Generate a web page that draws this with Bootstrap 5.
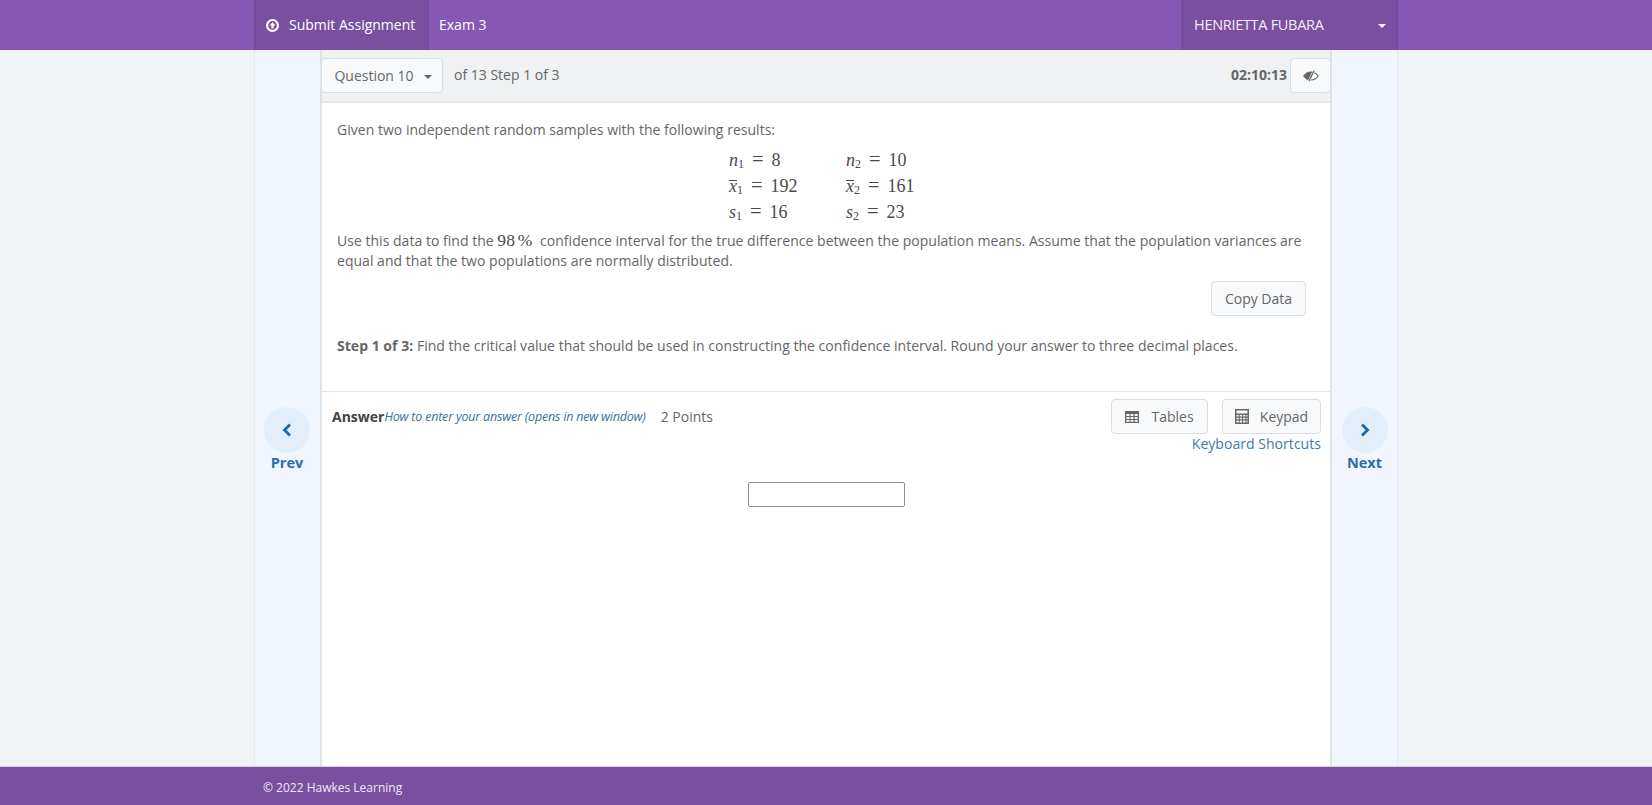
<!doctype html>
<html lang="en">
<head>
<meta charset="utf-8">
<title>Exam 3</title>
<link href="https://cdn.jsdelivr.net/npm/bootstrap@5.3.0/dist/css/bootstrap.min.css" rel="stylesheet">
<style>
html,body{height:100%}
body{font-family:"Open Sans","Noto Sans",sans-serif;font-size:14px;color:#666;background:#f1f4f7;line-height:20px;overflow:hidden}
.topbar{background:#8757b6;height:50px;flex:none}
.shell{width:1144px;margin:0 auto}
.submit-link{background:#7b4fa0;color:#fff;text-decoration:none;width:175px;padding-left:11px;gap:10px;border-left:1px solid #744a98;border-right:1px solid #744a98;font-size:14px}
.exam-title{color:#fff;padding-left:10px;font-size:14px}
.user-box{background:#7b4fa0;color:#f3ecf8;width:217px;padding:0 11px 0 13px;border-right:1px solid #6f4793;font-size:14.5px;letter-spacing:-.3px}
.caret-w{width:0;height:0;border-left:4px solid transparent;border-right:4px solid transparent;border-top:4px solid #fff;margin-top:2px}
.caret-d{width:0;height:0;border-left:4px solid transparent;border-right:4px solid transparent;border-top:4px solid #666;margin-top:2px}
.mid{min-height:0}
.mid .shell{border-left:1px solid #e4e9ef;border-right:1px solid #e4e9ef;background:#f1f6fe}
.side-col{width:65px;flex:none;padding-top:357px;color:#2a6fa8;font-weight:700;font-size:14.5px;text-align:center}
.side-prev{padding-right:1px}
.round-nav{width:46px;height:46px;border-radius:50%;background:#e3eefb;margin:0 auto}
.center-col{width:1012px;flex:none;background:#fff;border-left:2px solid #dfe3e7;border-right:2px solid #dfe3e7}
.tool-row{height:53px;background:#eff1f3;border-bottom:2px solid #e6e8ea;padding:8px 0 0 0}
.soft-btn{background:#f7f9fa;border:1px solid #d5dfe5;border-radius:4px;color:#666;font-size:14px;height:35px;line-height:33px;padding:0;display:inline-flex;align-items:center;justify-content:center}
.q-btn{width:122px;gap:10px;margin-left:-1px;padding-left:2px}
.of-text{margin-left:11px;margin-top:7px}
.timer{font-weight:700;margin-top:7px;margin-right:3px}
.eye-btn{width:41px;margin-right:-1px}
.q-body{padding:17px 16px 0 15px;height:289px;border-bottom:1px solid #e3e5e7}
.q-line{margin:0;letter-spacing:.025px}
.stats{display:grid;grid-template-columns:117px auto;grid-auto-rows:26px;justify-content:start;margin:7px 0 6px 392px;font-family:"Liberation Serif",serif;font-size:18px;color:#4a4a4a;line-height:26px}
.stats i{font-style:italic}
.stats sub{font-size:12px;font-style:normal;bottom:-.2em;line-height:0}
.eqs{margin:0 8px 0 8px;font-size:20.5px;line-height:0}
.xbar{display:inline-block;line-height:10px;border-top:1px solid #4a4a4a}
.pct{font-family:"Liberation Serif",serif;font-size:17.5px;word-spacing:-1.5px;color:#4a4a4a;margin-right:4px;line-height:1}
.copy-row{margin-top:10px;padding-right:8px}
.copy-btn{width:95px}
.step-line{margin-top:20px}
.ans-head{padding:7px 9px 0 10px;height:80px}
.ans-label{font-weight:700;color:#444;line-height:20px;margin-top:8px}
.ans-help{font-style:italic;font-size:12.5px;color:#3b6f9f;text-decoration:none;letter-spacing:-.2px;margin-top:8px}
.ans-pts{margin-left:15px;margin-top:8px}
.tool-btn{height:35px}
.t-btn{width:97px;gap:12px}
.k-btn{width:99px;gap:11px;margin-left:14px}
.kb-link{color:#3a7bab;text-decoration:none;font-size:14px;line-height:20px;letter-spacing:.04px}
.ans-field{width:157px;height:25px;border:1px solid #8f8f8f;border-radius:2px;background:#fff;display:block;margin:10px auto 0;padding:0}
.bottom-bar{background:#7b4fa0;height:39px;flex:none;border-top:1px solid #d6cfe0;color:#f0e8f5;font-size:12px}
.bottom-bar .shell{padding-left:9px;padding-top:3px}
</style>
</head>
<body class="d-flex flex-column">
<nav class="topbar">
  <div class="shell d-flex h-100">
    <a class="submit-link d-flex align-items-center" href="#">
      <svg width="13" height="13" viewBox="0 0 16 16" aria-hidden="true"><path fill="#fff" fill-rule="evenodd" d="M8 0a8 8 0 1 1 0 16A8 8 0 0 1 8 0zm0 2.6a5.4 5.4 0 1 0 0 10.800A5.400 5.400 0 0 0 8 2.600z"/><path fill="#fff" d="M8 4L11.700 8H9.300V11.700H6.700V8H4.300z"/></svg>
      <span>Submit Assignment</span>
    </a>
    <div class="exam-title d-flex align-items-center">Exam 3</div>
    <div class="user-box ms-auto d-flex align-items-center justify-content-between">
      <span>HENRIETTA FUBARA</span><span class="caret-w"></span>
    </div>
  </div>
</nav>
<div class="mid flex-grow-1">
  <div class="shell d-flex h-100">
    <div class="side-col side-prev">
      <div class="round-nav d-flex align-items-center justify-content-center">
        <svg width="10" height="14" viewBox="0 0 10 14" aria-hidden="true"><path d="M8 1.500L2.500 7 8 12.500" fill="none" stroke="#2268a4" stroke-width="2.800"/></svg>
      </div>
      <div>Prev</div>
    </div>
    <main class="center-col">
      <div class="tool-row d-flex">
        <button class="soft-btn q-btn" type="button">Question 10 <span class="caret-d"></span></button>
        <span class="of-text">of 13 Step 1 of 3</span>
        <span class="timer ms-auto">02:10:13</span>
        <button class="soft-btn eye-btn" type="button" aria-label="Hide timer">
          <svg width="16" height="12" viewBox="0 0 16 12" aria-hidden="true"><path fill="none" stroke="#666" stroke-width="1.200" d="M.8 6C2.500 3.400 5 2 8 2s5.500 1.400 7.200 4C13.500 8.600 11 10 8 10S2.500 8.600.8 6z"/><path fill="#666" d="M1 6c1.500-2.400 3.800-4 6.500-4 .6 0 1.200.1 1.800.2L6 10c-2.100-.4-3.900-1.900-5-4z"/><path stroke="#fff" stroke-width="2.400" d="M11 .8L6 11.200"/><path stroke="#666" stroke-width="1.300" d="M11 .8L6 11.200"/></svg>
        </button>
      </div>
      <section class="q-body">
        <p class="q-line">Given two independent random samples with the following results:</p>
        <div class="stats">
          <div><i>n</i><sub>1</sub><span class="eqs">=</span>8</div><div><i>n</i><sub>2</sub><span class="eqs">=</span>10</div>
          <div><i class="xbar">x</i><sub>1</sub><span class="eqs">=</span>192</div><div><i class="xbar">x</i><sub>2</sub><span class="eqs">=</span>161</div>
          <div><i>s</i><sub>1</sub><span class="eqs">=</span>16</div><div><i>s</i><sub>2</sub><span class="eqs">=</span>23</div>
        </div>
        <p class="q-line">Use this data to find the <span class="pct">98 %</span> confidence interval for the true difference between the population means. Assume that the population variances are equal and that the two populations are normally distributed.</p>
        <div class="copy-row d-flex justify-content-end">
          <button class="soft-btn copy-btn" type="button">Copy Data</button>
        </div>
        <p class="q-line step-line"><strong>Step 1 of 3:</strong> Find the critical value that should be used in constructing the confidence interval. Round your answer to three decimal places.</p>
      </section>
      <section class="ans-head d-flex">
        <span class="ans-label">Answer</span>
        <a class="ans-help" href="#">How to enter your answer (opens in new window)</a>
        <span class="ans-pts">2 Points</span>
        <div class="ms-auto text-end">
          <div class="d-flex justify-content-end">
            <button class="soft-btn tool-btn t-btn" type="button">
              <svg width="14" height="12" viewBox="0 0 14 12" aria-hidden="true"><path fill="#666" fill-rule="evenodd" d="M0 0h14v12H0zM1.300 3v2h3.200V3zm4.200 0v2h3V3zm4.200 0v2h3V3zM1.300 6v2h3.200V6zm4.200 0v2h3V6zm4.200 0v2h3V6zM1.300 9v1.800h3.200V9zm4.200 0v1.800h3V9zm4.200 0v1.800h3V9z"/></svg>
              <span>Tables</span>
            </button>
            <button class="soft-btn tool-btn k-btn" type="button">
              <svg width="14" height="15" viewBox="0 0 14 15" aria-hidden="true"><path fill="#666" fill-rule="evenodd" d="M0 0h14v15H0zM1.500 1.500v3h11v-3zM1.500 6v1.500h2.300V6zm3.300 0v1.500h2.300V6zm3.300 0v1.500h2.300V6zm3.300 0v1.500h1.100V6zM1.500 8.700v1.500h2.300V8.700zm3.300 0v1.500h2.300V8.700zm3.300 0v1.500h2.300V8.700zm3.300 0v1.500h1.100V8.700zM1.500 11.400v2.100h2.300v-2.100zm3.300 0v2.100h2.300v-2.100zm3.300 0v2.100h2.300v-2.100zm3.300 0v2.100h1.100v-2.100z"/></svg>
              <span>Keypad</span>
            </button>
          </div>
          <a class="kb-link" href="#">Keyboard Shortcuts</a>
        </div>
      </section>
      <input class="ans-field" type="text" aria-label="Answer">
    </main>
    <div class="side-col">
      <div class="round-nav d-flex align-items-center justify-content-center">
        <svg width="10" height="14" viewBox="0 0 10 14" aria-hidden="true"><path d="M2 1.500L7.500 7 2 12.500" fill="none" stroke="#2268a4" stroke-width="2.800"/></svg>
      </div>
      <div>Next</div>
    </div>
  </div>
</div>
<footer class="bottom-bar">
  <div class="shell d-flex align-items-center h-100">© 2022 Hawkes Learning</div>
</footer>
<script src="https://cdn.jsdelivr.net/npm/bootstrap@5.3.0/dist/js/bootstrap.bundle.min.js"></script>
</body>
</html>
